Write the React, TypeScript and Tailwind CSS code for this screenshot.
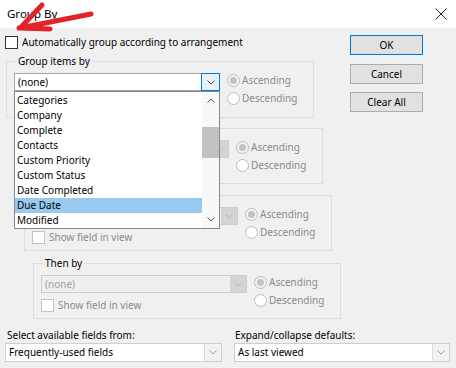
import React from 'react';

const FONT = "font-['Noto_Sans',sans-serif]";

function Chevron({ color = '#606060', up = false }: { color?: string; up?: boolean }) {
  return (
    <svg width="8" height="5" viewBox="0 0 8 5">
      <path
        d={up ? 'M0.5 4.5 L4 1 L7.5 4.5' : 'M0.5 0.5 L4 4 L7.5 0.5'}
        fill="none"
        stroke={color}
        strokeWidth="1"
      />
    </svg>
  );
}

type ComboKind = 'focused' | 'disabled' | 'normal';

function Combo({ value, kind, className = '' }: { value?: string; kind: ComboKind; className?: string }) {
  if (kind === 'disabled') {
    return (
      <div className={`flex h-[18px] border border-[#cccccc] bg-[#efefef] ${className}`}>
        <span className="flex-1 pl-[3px] leading-[16px] text-[#a0a0a0]">{value}</span>
        <span className="flex w-[16px] items-center justify-center bg-[#d4d4d4]">
          <Chevron color="#b8b8b8" />
        </span>
      </div>
    );
  }
  if (kind === 'focused') {
    return (
      <div className={`flex h-[18px] border border-[#a5a5a5] bg-white ${className}`}>
        <span className="flex-1 pl-[3px] leading-[16px]">{value}</span>
        <span className="-my-px -mr-px flex w-[19px] items-center justify-center border border-[#0078d7] bg-[#e5f1fb]">
          <Chevron color="#404040" />
        </span>
      </div>
    );
  }
  return (
    <div className={`flex h-[19px] border border-[#cfcfcf] bg-white ${className}`}>
      <span className="flex-1 pl-[3px] leading-[17px]">{value}</span>
      <span className="flex w-[17px] items-center justify-center border-l border-[#dcdcdc] bg-[#f2f2f2]">
        <Chevron color="#9a9a9a" />
      </span>
    </div>
  );
}

function Check({ dark = false }: { dark?: boolean }) {
  return (
    <span
      className={`inline-block h-[13px] w-[13px] shrink-0 border bg-white ${dark ? 'border-[#333333]' : 'border-[#c4c4c4]'}`}
    />
  );
}

function Radios() {
  return (
    <div className="-mt-[2px] ml-[7px] flex flex-col text-[#8a8a8a]">
      <div className="flex h-[18px] items-center gap-[2px]">
        <span className="flex h-[13px] w-[13px] items-center justify-center rounded-full border border-[#bcbcbc] bg-[#f4f4f4]">
          <span className="h-[7px] w-[7px] rounded-full bg-[#c2c2c2]" />
        </span>
        Ascending
      </div>
      <div className="flex h-[18px] items-center gap-[2px]">
        <span className="h-[13px] w-[13px] rounded-full border border-[#bcbcbc] bg-white" />
        Descending
      </div>
    </div>
  );
}

// label / value / showField are left empty where the open list covers them
function Group({
  label,
  first = false,
  value,
  showField,
  className = '',
}: {
  label?: string;
  first?: boolean;
  value?: string;
  showField?: string;
  className?: string;
}) {
  return (
    <fieldset
      className={`w-[308px] border border-[#dcdcdc] pl-[7px] ${first ? 'h-[65px]' : 'h-[64px]'} ${className}`}
    >
      <legend className="ml-[2px] h-[16px] px-[2px] leading-[16px]">{label}</legend>
      <div className="mt-[4px] flex">
        <div className="flex w-[206px] flex-col">
          <Combo value={value} kind={first ? 'focused' : 'disabled'} />
          {!first && (
            <div className="mt-[6px] flex items-center gap-[4px] text-[#8a8a8a]">
              <Check />
              <span className="leading-[13px]">{showField}</span>
            </div>
          )}
        </div>
        <Radios />
      </div>
    </fieldset>
  );
}

const items = [
  'Categories',
  'Company',
  'Complete',
  'Contacts',
  'Custom Priority',
  'Custom Status',
  'Date Completed',
  'Due Date',
  'Modified',
];

function Button({ children, primary = false, className = '' }: { children: React.ReactNode; primary?: boolean; className?: string }) {
  return (
    <div
      className={`flex h-[20px] w-[73px] items-center justify-center border bg-[#e1e1e1] ${primary ? 'border-[#0078d7]' : 'border-[#adadad]'} ${className}`}
    >
      {children}
    </div>
  );
}

export default function App() {
  return (
    <div className={`relative h-[368px] w-[456px] overflow-hidden bg-[#f0f0f0] text-[10px] text-black ${FONT}`}>
      <div className="flex h-[28px] items-center justify-between bg-white pl-[7px] pr-[9px]">
        <span className="text-[11.5px]">Group By</span>
        <svg width="12" height="12" viewBox="0 0 12 12">
          <path d="M0.5 0.5 L11.5 11.5 M11.5 0.5 L0.5 11.5" stroke="#222" strokeWidth="1" />
        </svg>
      </div>

      <div className="flex">
        <div className="w-[350px]">
          <div className="ml-[5px] mt-[8px] flex h-[13px] items-center gap-[4px]">
            <Check dark />
            <span>Automatically group according to arrangement</span>
          </div>
          <Group label="Group items by" first value="(none)" className="ml-[6px] mt-[4px]" />
          <Group className="ml-[15px] mt-[2px]" />
          <Group showField="Show field in view" className="ml-[24px] mt-[3px]" />
          <Group label="Then by" value="(none)" showField="Show field in view" className="ml-[33px] mt-[4px]" />
        </div>
        <div className="mt-[7px] flex flex-col">
          <Button primary>OK</Button>
          <Button className="mt-[9px]">Cancel</Button>
          <Button className="mt-[8px]">Clear All</Button>
        </div>
      </div>

      <div className="mt-[8px] flex">
        <div className="ml-[5px] w-[217px]">
          <div className="pl-[2px] leading-[16px]">Select available fields from:</div>
          <Combo value="Frequently-used fields" kind="normal" />
        </div>
        <div className="ml-[12px] w-[216px]">
          <div className="pl-[1px] leading-[16px]">Expand/collapse defaults:</div>
          <Combo value="As last viewed" kind="normal" />
        </div>
      </div>

      {/* open dropdown list of "Group items by" */}
      <div className="absolute left-[14px] top-[91px] flex h-[138px] w-[206px] border border-[#828790] bg-white">
        <div className="flex-1 pt-[1px]">
          {items.map((it) => (
            <div
              key={it}
              className={`h-[15px] pl-[2px] leading-[15px] ${it === 'Due Date' ? 'bg-[#99c9ef]' : ''}`}
            >
              {it}
            </div>
          ))}
        </div>
        <div className="flex w-[17px] flex-col bg-[#f8f8f8]">
          <div className="flex h-[17px] items-center justify-center">
            <Chevron color="#606060" up />
          </div>
          <div className="mt-[18px] h-[31px] bg-[#c1c1c1]" />
          <div className="flex-1" />
          <div className="flex h-[17px] items-center justify-center">
            <Chevron color="#606060" />
          </div>
        </div>
      </div>

      {/* red annotation arrow */}
      <svg className="pointer-events-none absolute left-0 top-0" width="100" height="40" viewBox="0 0 100 40">
        <path
          d="M42 5 L22 26 M20 28 L91 14 M19 28 L50 29"
          fill="none"
          stroke="#e3222b"
          strokeWidth="5"
          strokeLinecap="round"
          strokeLinejoin="round"
        />
      </svg>
    </div>
  );
}
